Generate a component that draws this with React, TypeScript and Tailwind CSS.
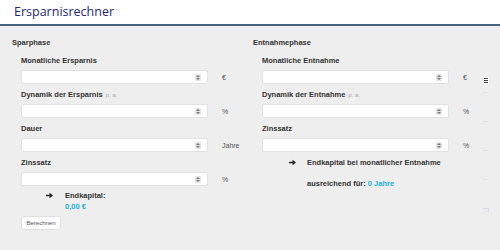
import React from 'react';

type Field = { label: string; suffix?: string; unit: string };

const LEFT: Field[] = [
    { label: 'Monatliche Ersparnis', unit: '€' },
    { label: 'Dynamik der Ersparnis', suffix: 'p. a.', unit: '%' },
    { label: 'Dauer', unit: 'Jahre' },
    { label: 'Zinssatz', unit: '%' },
];

const RIGHT: Field[] = [
    { label: 'Monatliche Entnahme', unit: '€' },
    { label: 'Dynamik der Entnahme', suffix: 'p. a.', unit: '%' },
    { label: 'Zinssatz', unit: '%' },
];

/* kleiner Spinner wie beim number-input */
function Spinner() {
    return (
        <div className="flex h-[7px] w-[6px] flex-col items-center justify-center gap-[1px] rounded-[1px] bg-[#e4e4e4]">
            <div className="h-0 w-0 border-x-[2px] border-b-[2px] border-x-transparent border-b-[#777]" />
            <div className="h-0 w-0 border-x-[2px] border-t-[2px] border-x-transparent border-t-[#777]" />
        </div>
    );
}

function Row({ field }: { field: Field }) {
    return (
        <div className="flex flex-col">
            <div className="flex h-[9px] items-center gap-[3px] leading-none">
                <span className="text-[7.5px] font-bold text-[#333]">{field.label}</span>
                {field.suffix && <span className="text-[6px] text-[#a8a8a8]">{field.suffix}</span>}
            </div>
            <div className="mt-[5px] flex h-[14px] items-center">
                <div className="flex h-[14px] w-[187px] items-center justify-end rounded-[2px] border border-[#e2e2e2] bg-white pr-[6px]">
                    <Spinner />
                </div>
                <span className="ml-[14px] text-[7px] leading-none text-[#555]">{field.unit}</span>
            </div>
        </div>
    );
}

function Arrow() {
    return (
        <svg width="7" height="7" viewBox="0 0 10 10" className="shrink-0">
            <path d="M0 4h5V1l5 4-5 4V6H0z" fill="#222" />
        </svg>
    );
}

export default function App() {
    return (
        <div className="h-[250px] w-[500px] overflow-hidden bg-[#eeeeee] font-['Liberation_Sans',Arial,sans-serif]">
            <header className="flex h-[26px] items-center border-b-2 border-[#46627f] bg-white pl-[14px]">
                <h1 className="font-['Open_Sans',sans-serif] text-[12.5px] leading-none text-[#232878]">Ersparnisrechner</h1>
            </header>

            <div className="flex pt-[12px]">
                {/* Sparphase */}
                <section className="w-[253px] shrink-0 pl-[12px]">
                    <h2 className="flex h-[10px] items-center text-[7.5px] font-bold text-[#333]">Sparphase</h2>
                    <div className="mt-[8px] flex flex-col gap-[6px] pl-[9px]">
                        {LEFT.map((f) => (
                            <Row key={f.label} field={f} />
                        ))}
                    </div>
                    <div className="mt-[4px] flex gap-[12px] pl-[34px]">
                        <div className="pt-[2px]">
                            <Arrow />
                        </div>
                        <div className="flex flex-col">
                            <span className="text-[7.5px] font-bold text-[#333]">Endkapital:</span>
                            <span className="text-[7.5px] font-bold text-[#1cb0d9]">0,00 €</span>
                        </div>
                    </div>
                    <button
                        type="button"
                        className="ml-[9px] mt-[3px] block h-[14px] w-[40px] rounded-[2px] border border-[#e0e0e0] bg-white text-[6px] leading-none text-[#555]"
                    >
                        Berechnen
                    </button>
                </section>

                {/* Entnahmephase */}
                <section className="w-[229px] shrink-0">
                    <h2 className="flex h-[10px] items-center text-[7.5px] font-bold text-[#333]">Entnahmephase</h2>
                    <div className="mt-[8px] flex flex-col gap-[6px] pl-[9px]">
                        {RIGHT.map((f) => (
                            <Row key={f.label} field={f} />
                        ))}
                    </div>
                    <div className="mt-[5px] flex flex-col pl-[36px]">
                        <div className="flex items-center gap-[11px]">
                            <Arrow />
                            <span className="text-[7.5px] font-bold text-[#333]">Endkapital bei monatlicher Entnahme</span>
                        </div>
                        <div className="mt-[10px] pl-[18px] text-[7.5px] font-bold text-[#333]">
                            ausreichend für: <span className="text-[#1cb0d9]">0 Jahre</span>
                        </div>
                    </div>
                </section>

                {/* Seitenleiste */}
                <aside className="flex w-[8px] flex-col items-center pt-[39px]">
                    <div className="flex flex-col gap-[1px] bg-white p-[1px]">
                        <div className="h-px w-[4px] bg-[#444]" />
                        <div className="h-px w-[4px] bg-[#444]" />
                        <div className="h-px w-[4px] bg-[#444]" />
                    </div>
                    <div className="mt-[8px] flex flex-col gap-[28px]">
                        <div className="h-px w-[5px] bg-[#e2e2e2]" />
                        <div className="h-px w-[5px] bg-[#e2e2e2]" />
                        <div className="h-px w-[5px] bg-[#e2e2e2]" />
                        <div className="h-px w-[5px] bg-[#e2e2e2]" />
                        <div className="flex">
                            <div className="h-px w-[5px] bg-[#d8d8e4]" />
                            <div className="h-[4px] w-px bg-[#d8d8e4]" />
                        </div>
                    </div>
                </aside>
            </div>
        </div>
    );
}
